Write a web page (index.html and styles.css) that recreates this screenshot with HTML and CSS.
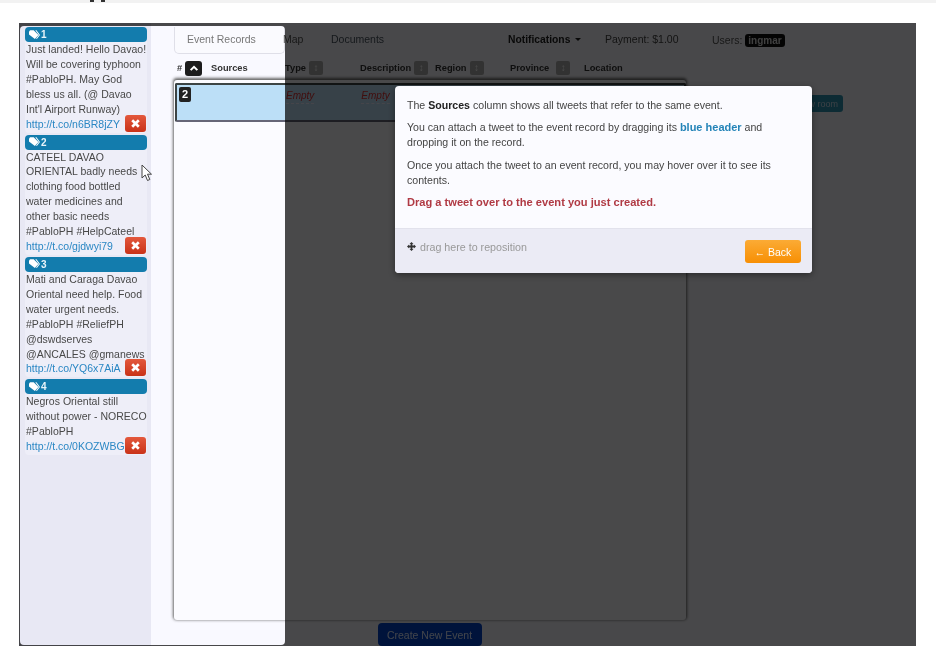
FILE: index.html
```html
<!DOCTYPE html>
<html lang="en">
<head>
<meta charset="utf-8">
<title>Event Records</title>
<link rel="stylesheet" href="styles.css">
</head>
<body>
<div class="topstrip"><i class="tick"></i><i class="tick"></i></div>
<div class="app">
  <aside class="sidebar">
    <article class="tweet">
      <header class="tweet-head"><svg class="tag" viewBox="0 0 14 12"><path d="M0 1.5 1.5 0H6l6 6-4.5 5L0 5.5z"/><path d="M8 0h1.5l4.5 6-4 5-1-.6L12.500 6z"/></svg>1</header>
      <p class="tweet-text">Just landed! Hello Davao!<br>Will be covering typhoon<br>#PabloPH. May God<br>bless us all. (@ Davao<br>Int'l Airport Runway)</p>
      <div class="tweet-foot"><a class="link">http://t.co/n6BR8jZY</a><button class="del"><svg viewBox="0 0 10 10"><path d="M2 2l6 6M8 2l-6 6"/></svg></button></div>
    </article>
    <article class="tweet">
      <header class="tweet-head"><svg class="tag" viewBox="0 0 14 12"><path d="M0 1.5 1.5 0H6l6 6-4.5 5L0 5.5z"/><path d="M8 0h1.5l4.5 6-4 5-1-.6L12.500 6z"/></svg>2</header>
      <p class="tweet-text">CATEEL DAVAO<br>ORIENTAL badly needs<br>clothing food bottled<br>water medicines and<br>other basic needs<br>#PabloPH #HelpCateel</p>
      <div class="tweet-foot"><a class="link">http://t.co/gjdwyi79</a><button class="del"><svg viewBox="0 0 10 10"><path d="M2 2l6 6M8 2l-6 6"/></svg></button></div>
    </article>
    <article class="tweet">
      <header class="tweet-head"><svg class="tag" viewBox="0 0 14 12"><path d="M0 1.5 1.5 0H6l6 6-4.5 5L0 5.5z"/><path d="M8 0h1.5l4.5 6-4 5-1-.6L12.500 6z"/></svg>3</header>
      <p class="tweet-text">Mati and Caraga Davao<br>Oriental need help. Food<br>water urgent needs.<br>#PabloPH #ReliefPH<br>@dswdserves<br>@ANCALES @gmanews</p>
      <div class="tweet-foot"><a class="link">http://t.co/YQ6x7AiA</a><button class="del"><svg viewBox="0 0 10 10"><path d="M2 2l6 6M8 2l-6 6"/></svg></button></div>
    </article>
    <article class="tweet">
      <header class="tweet-head"><svg class="tag" viewBox="0 0 14 12"><path d="M0 1.5 1.5 0H6l6 6-4.5 5L0 5.5z"/><path d="M8 0h1.5l4.5 6-4 5-1-.6L12.500 6z"/></svg>4</header>
      <p class="tweet-text">Negros Oriental still<br>without power - NORECO<br>#PabloPH</p>
      <div class="tweet-foot"><a class="link">http://t.co/0KOZWBG</a><button class="del"><svg viewBox="0 0 10 10"><path d="M2 2l6 6M8 2l-6 6"/></svg></button></div>
    </article>
  </aside>

  <main class="workspace">
    <section class="records">
      <nav class="tabs">
        <span class="tab active">Event Records</span>
        <span class="tab map">Map</span>
        <span class="tab docs">Documents</span>
        <span class="notify">Notifications <i class="caret"></i></span>
        <span class="payment">Payment: $1.00</span>
      </nav>
      <div class="thead">
        <span class="th th-num">#<button class="sort-up"><svg viewBox="0 0 12 8"><path d="M2 6l4-4 4 4"/></svg></button></span>
        <span class="th th-src">Sources</span>
        <span class="th th-type">Type<button class="sort">↕</button></span>
        <span class="th th-desc">Description<button class="sort">↕</button></span>
        <span class="th th-region">Region<button class="sort">↕</button></span>
        <span class="th th-prov">Province<button class="sort">↕</button></span>
        <span class="th th-loc">Location</span>
      </div>
      <div class="panel">
        <div class="row">
          <span class="row-num">2</span>
          <em class="empty empty-type">Empty</em>
          <em class="empty empty-desc">Empty</em>
        </div>
      </div>
      <div class="actions"><button class="create">Create New Event</button></div>
    </section>
    <section class="side">
      <div class="users">Users: <span class="badge">ingmar</span></div>
      <button class="room">View room</button>
    </section>
  </main>

  <div class="spotlight"></div>

  <svg class="cursor" viewBox="0 0 12 18"><path d="M1 1v13l3.2-3 2.3 5.500 2.300-1-2.300-5.300H10.500z"/></svg>

  <div class="popover">
    <div class="pop-body">
      <p>The <b class="strong">Sources</b> column shows all tweets that refer to the same event.</p>
      <p>You can attach a tweet to the event record by dragging its <b class="blue">blue header</b> and<br>dropping it on the record.</p>
      <p>Once you attach the tweet to an event record, you may hover over it to see its<br>contents.</p>
      <p class="cta">Drag a tweet over to the event you just created.</p>
    </div>
    <div class="pop-foot">
      <span class="drag"><svg class="move" viewBox="0 0 12 12"><path d="M6 0l2.600 2.800H7.200v2h2V3.400L12 6 9.200 8.600V7.200h-2v2h1.400L6 12 3.400 9.200h1.400v-2h-2v1.400L0 6l2.800-2.600v1.400h2v-2H3.400z"/></svg>drag here to reposition</span>
      <button class="back">← Back</button>
    </div>
  </div>
</div>
</body>
</html>
```
FILE: styles.css
```css
* { box-sizing: border-box; }
html, body { margin: 0; padding: 0; background: #fff; }
body { width: 936px; height: 662px; overflow: hidden; font-family: "Liberation Sans", Arial, sans-serif; font-size: 11px; color: #333; }
button { font-family: inherit; border: 0; padding: 0; margin: 0; }
p { margin: 0; }

.topstrip { height: 23px; background: linear-gradient(#f2f2f2 0 3px, #fff 3px); display: flex; gap: 7px; padding-left: 90px; }
.tick { width: 4px; height: 2px; background: #333; }

.app { position: relative; width: 897px; height: 623px; margin-left: 19px; background: #f9f9ff; overflow: hidden; display: flex; filter: blur(0.45px); }

/* sidebar */
.sidebar { width: 132px; flex: none; background: #e8e8f4; padding: 4px 4px 0 6px; display: flex; flex-direction: column; gap: 2px; }
.tweet { background: #eeeef8; border-radius: 4px; padding-bottom: 1px; }
.tweet-head { height: 15px; background: #137cad; border-radius: 4px; color: #e8f4fa; font-weight: bold; font-size: 10px; line-height: 15px; padding-left: 4px; display: flex; align-items: center; gap: 1px; }
.tag { width: 11px; height: 10px; fill: #fff; flex: none; }
.tweet-text { font-size: 10.500px; line-height: 14.900px; color: #484848; padding-left: 1px; white-space: nowrap; letter-spacing: .02px; }
.tweet-foot { display: flex; align-items: flex-end; justify-content: space-between; height: 15px; padding: 0 1px; }
.link { color: #2a87c4; font-size: 10.500px; line-height: 15px; white-space: nowrap; }
.del { width: 21px; height: 17px; flex: none; border-radius: 3px; background: linear-gradient(#e3583c, #c93218); display: flex; align-items: center; justify-content: center; }
.del svg { width: 11px; height: 11px; stroke: #fff; stroke-width: 2.400; fill: none; }

/* workspace */
.workspace { flex: 1; display: flex; padding-left: 22px; gap: 24px; }
.records { width: 513px; flex: none; display: flex; flex-direction: column; }
.tabs { height: 31px; display: flex; align-items: flex-start; font-size: 10.500px; margin-top: 4px; }
.tab { color: #777; }
.active { width: 111px; height: 27px; padding: 5px 0 0 12px; margin-left: 1px; background: #fafafe; border: 1px solid #dfdfe8; border-top: 0; border-radius: 0 0 5px 5px; line-height: 15px; }
.map, .docs, .notify, .payment { padding-top: 5px; line-height: 15px; }
.map { margin-left: -2px; width: 48px; color: #555; }
.docs { width: 177px; color: #4a5560; }
.notify { width: 97px; font-weight: bold; color: #222; font-size: 10.300px; }
.caret { display: inline-block; border: 3px solid transparent; border-top-color: #222; border-bottom: 0; vertical-align: 2px; margin-left: 2px; }
.payment { color: #444; }
.thead { height: 22px; display: flex; align-items: center; font-size: 9.300px; font-weight: bold; color: #333; padding-bottom: 2px; }
.th { display: flex; align-items: center; flex: none; }
.th-num { width: 38px; padding-left: 4px; gap: 3px; }
.th-src { width: 74px; }
.th-type { width: 75px; gap: 3px; }
.th-desc { width: 75px; gap: 3px; }
.th-region { width: 75px; gap: 3px; }
.th-prov { width: 74px; gap: 7px; }
.sort-up { width: 17px; height: 15px; background: #1c1c1c; border-radius: 3px; display: flex; align-items: center; justify-content: center; }
.sort-up svg { width: 10px; height: 7px; fill: none; stroke: #fff; stroke-width: 2.400; }
.sort { width: 14px; height: 14px; background: #aeaeae; color: #fff; border-radius: 2px; font-size: 10px; line-height: 14px; }

.panel { height: 540px; background: #fbfbff; box-shadow: 0 -1px 3px 1px #666; border-radius: 3px; margin-left: 1px; padding: 3px 0 0 1px; }
.row { height: 39px; background: #bcdff7; border: 2px solid #3c4444; border-bottom-color: #667; border-radius: 2px; padding: 2px 0 0 2px; display: flex; font-size: 10px; }
.row-num { width: 12px; height: 15px; background: #222; color: #fff; font-weight: bold; font-size: 11px; line-height: 15px; text-align: center; border-radius: 2px; }
.empty { color: #d33; height: 15px; line-height: 14px; border-bottom: 1px dashed #eef; margin-top: 2px; }
.empty-type { margin-left: 95px; }
.empty-desc { margin-left: 47px; }
.actions { display: flex; justify-content: center; padding-top: 3px; }
.create { width: 104px; height: 23px; background: #0044cc; color: #dfe8ff; border-radius: 4px; font-size: 10.500px; }

.side { flex: 1; padding-top: 10px; }
.users { font-size: 10.500px; color: #555; height: 14px; padding-left: 2px; line-height: 14px; }
.badge { display: inline-block; background: #111; color: #ddd; border-radius: 3px; padding: 0 3px; font-weight: bold; font-size: 10px; line-height: 13px; }
.room { display: block; margin: 48px 0 0 77px; width: 56px; height: 17px; background: #2f96b4; color: #cde; border-radius: 3px; font-size: 9px; text-align: right; padding-right: 5px; white-space: nowrap; }

/* tour */
.spotlight { position: absolute; left: 1px; top: 3px; width: 265px; height: 619px; border-radius: 4px; box-shadow: 0 0 0 1200px rgba(0, 0, 0, .71); }
.cursor { position: absolute; left: 122px; top: 141px; width: 12px; height: 18px; fill: #fff; stroke: #444; stroke-width: 1; }
.popover { position: absolute; left: 376px; top: 63px; width: 417px; height: 187px; background: #fbfbff; border-radius: 4px; display: flex; flex-direction: column; box-shadow: 0 2px 6px rgba(0,0,0,.4); overflow: hidden; }
.pop-body { flex: 1; padding: 12px 12px 0; font-size: 10.600px; line-height: 15px; color: #444; display: flex; flex-direction: column; gap: 7.400px; }
.strong { color: #222; }
.blue { color: #2484b8; font-size: 11px; }
.cta { color: #b03a44; font-weight: bold; font-size: 11.100px; }
.pop-foot { height: 45px; background: #ebebf5; border-top: 1px solid #e2e2ec; display: flex; justify-content: space-between; padding: 10px 11px 0 12px; }
.drag { color: #999; font-size: 10.700px; display: flex; align-items: center; gap: 4px; height: 15px; }
.move { width: 9px; height: 9px; fill: #333; }
.back { width: 56px; height: 23px; margin-top: 1px; background: linear-gradient(#fbab35, #f78f04); color: #fff; border-radius: 3px; font-size: 10.500px; }
```
